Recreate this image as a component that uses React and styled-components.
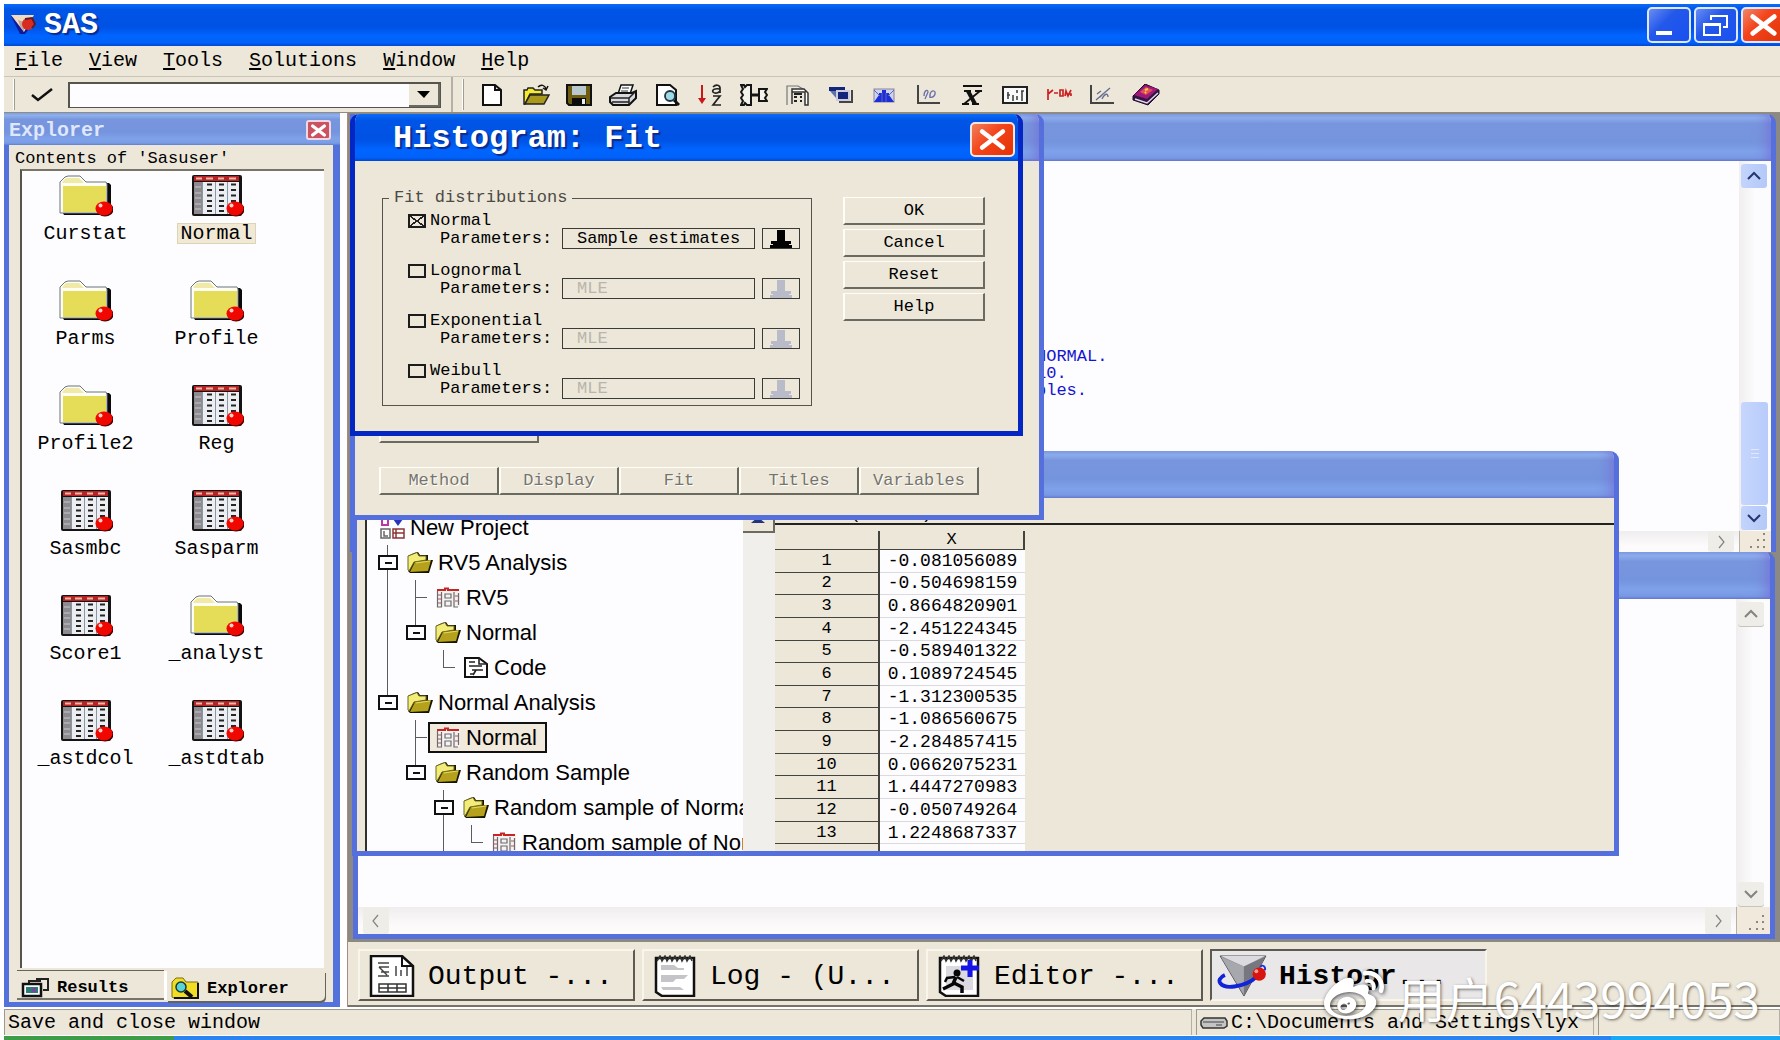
import { useState } from "react";
import styled, { createGlobalStyle, css } from "styled-components";
import { FaWeibo } from "react-icons/fa";

const GlobalStyle = createGlobalStyle`
  :root {
    --face: #ece7d9;
    --shadow: #6b6a60;
    --paper: #fdfcfe;
    --frame: #5472dc;
    --mono: "Liberation Mono", "Noto Sans CJK SC", monospace;
  }

  * {
    box-sizing: border-box;
  }

  body {
    margin: 0;
    background: #fff;
    color: #000;
    font-family: var(--mono);
    font-size: 20px;
  }

  button, input {
    font: inherit;
    color: inherit;
    margin: 0;
    padding: 0;
    border-radius: 0;
  }

  svg {
    display: block;
    flex: none;
  }
`;

const Page = styled.div`
  position: relative;
  display: flex;
  flex-direction: column;
  height: 100vh;
  min-height: 960px;
  overflow: hidden;
  padding-top: 4px;
`;

const activeBar = css`
  background: linear-gradient(#0a6cf8 0, #0054e6 14%, #0052e4 55%, #0064ff 75%, #0062fa 92%, #0048d0 100%);
`;

const inactiveBar = css`
  background: linear-gradient(#7f9fe6 0, #8eb0ec 8%, #7896de 20%, #7594de 60%, #7ea2ea 80%, #7a9ce6 94%, #5f7ccc 100%);
`;

/* main title bar */
const TitleBar = styled.header`
  ${activeBar}
  display: flex;
  align-items: center;
  gap: 8px;
  height: 42px;
  flex: none;
  margin: 0 -5px 0 4px;
  padding-left: 6px;

  & h1 {
    flex: 1;
    margin: 0;
    font-size: 30px;
    line-height: 36px;
    color: #fff;
    text-shadow: 2px 2px 1px #0a2c90;
  }
`;

const WindowButton = styled.button`
  display: flex;
  align-items: center;
  justify-content: center;
  width: 44px;
  height: 36px;
  margin-left: ${(props) => (props.$first ? "0" : "-5px")};
  border: 2px solid #dfe8ff;
  border-radius: 5px;
  background: ${(props) =>
    props.$close
      ? "linear-gradient(135deg, #f0886a, #f4441c 40%, #e03408)"
      : "linear-gradient(135deg, #6a8cf4, #2358ea 40%, #1a50f0)"};
`;

const MenuBar = styled.nav`
  display: flex;
  gap: 26px;
  flex: none;
  height: 30px;
  margin-left: 4px;
  padding-left: 11px;
  background: var(--face);

  & button {
    border: 0;
    background: none;
    line-height: 28px;
  }

  & u {
    text-underline-offset: 2px;
  }
`;

const ToolBar = styled.div`
  display: flex;
  align-items: center;
  flex: none;
  height: 37px;
  margin-left: 4px;
  border-top: 1px solid #c9c5b8;
  border-bottom: 1px solid #8f8c80;
  background: var(--face);
`;

const Grip = styled.span`
  width: 11px;
  height: 31px;
  border-right: 1px solid #a09c90;
  box-shadow: inset -1px 0 #fff;
`;

const ToolSeparator = styled.span`
  width: 2px;
  height: 35px;
  margin-left: 10px;
  background: #b4b0a4;
`;

const PlainButton = styled.button`
  display: flex;
  align-items: center;
  justify-content: center;
  width: ${(props) => props.$width || 28}px;
  height: 24px;
  border: 0;
  background: none;
`;

const CommandBox = styled.div`
  display: flex;
  width: 373px;
  height: 26px;
  border: 1px solid #55554d;
  border-width: 2px 1px 1px 2px;
  background: var(--paper);

  & input {
    flex: 1;
    min-width: 0;
    border: 0;
    background: none;
    padding: 0 4px;
    outline: none;
  }

  & button {
    display: flex;
    align-items: center;
    justify-content: center;
    width: 31px;
    border: 0;
    border-right: 2px solid var(--shadow);
    border-bottom: 2px solid var(--shadow);
    background: var(--face);
  }
`;

const ToolIcons = styled.div`
  display: flex;
  justify-content: space-between;
  width: 682px;
  margin-left: 14px;
`;

const Workspace = styled.main`
  display: flex;
  flex: 1;
  min-height: 0;
  gap: 7px;
  padding: 0 0 2px 4px;
`;

/* explorer */
const ExplorerPane = styled.section`
  display: flex;
  flex-direction: column;
  flex: none;
  width: 336px;
  border: 5px solid var(--frame);
  border-width: 0 7px 5px 5px;
  background: var(--face);
`;

const ExplorerTitle = styled.div`
  ${inactiveBar}
  display: flex;
  align-items: center;
  justify-content: space-between;
  flex: none;
  height: 32px;
  margin: 0 -7px 0 -5px;
  padding: 2px 9px 0 5px;
  font-weight: bold;
  color: #dfe7fb;

  & button {
    display: flex;
    align-items: center;
    justify-content: center;
    width: 25px;
    height: 20px;
    border: 2px solid #f0d8e0;
    border-radius: 3px;
    background: #cb5260;
  }
`;

const ExplorerCaption = styled.div`
  flex: none;
  height: 24px;
  padding-left: 6px;
  font-size: 17px;
  line-height: 28px;
`;

const IconGrid = styled.div`
  display: grid;
  grid-template-columns: 127px 135px;
  grid-auto-rows: 105px;
  align-content: start;
  flex: 1;
  min-height: 0;
  overflow: hidden;
  margin: 0 9px 0 11px;
  padding-top: 4px;
  border-left: 2px solid #55554d;
  border-top: 2px solid #77756a;
  background: var(--paper);
`;

const Entry = styled.button`
  display: flex;
  flex-direction: column;
  align-items: center;
  border: 0;
  background: none;

  & svg {
    margin-bottom: 7px;
  }

  & span {
    padding: 0 2px;
    line-height: 19px;
    ${(props) => props.$selected && "background: #f1e9d6; outline: 1px solid #ddd4b8;"}
  }
`;

const ExplorerTabs = styled.div`
  display: flex;
  flex: none;
  gap: 3px;
  height: 34px;
  padding: 3px 8px 1px 8px;
  font-size: 17px;
  font-weight: bold;

  & button {
    display: flex;
    align-items: center;
    gap: 7px;
    border: 0;
    background: var(--face);
    padding: 4px 0 0 4px;
  }
`;

const ResultsTab = styled.button`
  width: 147px;
  height: 29px;
  box-shadow: 0 -1px #66645a, inset 0 -2px #77756a, 3px 0 #fff;
`;

const ExplorerTab = styled.button`
  width: 158px;
  height: 30px;
  border-radius: 0 0 5px 0;
  box-shadow: 1px 2px #66645a;
`;

/* mdi area */
const RightSide = styled.div`
  display: flex;
  flex-direction: column;
  flex: 1;
  min-width: 0;
  border-left: 1px solid #a98c80;
`;

const Desktop = styled.div`
  position: relative;
  flex: 1;
  min-height: 0;
  overflow: hidden;
  background: #8c8884;
`;

const ChildWindow = styled.section`
  position: absolute;
  top: ${(props) => props.$top}px;
  left: ${(props) => props.$left}px;
  ${(props) => (props.$right !== undefined ? `right: ${props.$right}px;` : `width: ${props.$width}px;`)}
  ${(props) => (props.$height ? `height: ${props.$height}px;` : "bottom: 1px;")}
  display: flex;
  flex-direction: column;
  overflow: hidden;
  border: solid ${(props) => (props.$active ? "#0427c4" : "#5570dc")};
  border-width: 0 5px ${(props) => (props.$open ? 0 : 5)}px 5px;
  border-radius: ${(props) => (props.$active ? "9px" : "0")} 9px 0 0;
  background: var(--face);
`;

const ChildTitle = styled.div`
  ${(props) => (props.$active ? activeBar : inactiveBar)}
  display: flex;
  align-items: center;
  justify-content: space-between;
  flex: none;
  height: 47px;
  margin: 0 -5px;
  padding: 3px 8px 0 43px;
  color: #fff;
  ${(props) => !props.$active && "box-shadow: inset -14px 0 16px -8px #746cd4;"}

  & h2 {
    margin: 0;
    font-size: 32px;
    line-height: 40px;
    text-shadow: 2px 2px 1px #0a2c90;
  }
`;

const DialogClose = styled.button`
  display: flex;
  align-items: center;
  justify-content: center;
  width: 45px;
  height: 35px;
  border: 2px solid #fbe4dc;
  border-radius: 5px;
  background: linear-gradient(135deg, #f0805c, #f4431a 45%, #e23206);
`;

const TextPane = styled.div`
  display: grid;
  grid-template-columns: minmax(0, 1fr) ${(props) => props.$side}px;
  grid-template-rows: minmax(0, 1fr) ${(props) => props.$bar}px;
  flex: 1;
  min-height: 0;
  background: var(--paper);
`;

const LogText = styled.pre`
  margin: 0;
  padding: 187px 0 0 681px;
  font-family: var(--mono);
  font-size: 17px;
  line-height: 17px;
  color: #1414d2;
`;

const VerticalBar = styled.div`
  display: flex;
  flex-direction: column;
  justify-content: space-between;
  padding: 3px 3px 1px 2px;
  background: linear-gradient(90deg, #f0eeee, #fcfbfd 50%);
`;

const HorizontalBar = styled.div`
  display: flex;
  justify-content: space-between;
  padding: 0 5px;
  background: linear-gradient(#efedee, #fcfafb 70%);
`;

const ArrowButton = styled.button`
  display: flex;
  align-items: center;
  justify-content: center;
  width: 26px;
  height: ${(props) => (props.$flat ? "100%" : "24px")};
  border: 0;
  border-radius: 3px;
  color: ${(props) => (props.$live ? "#25356f" : "#85837f")};
  background: ${(props) => (props.$live ? "linear-gradient(90deg, #c3d4fc, #b4c9f8)" : "#efede8")};
  ${(props) => !props.$live && !props.$flat && "box-shadow: 0 1px #c8c4bc;"}
`;

const Thumb = styled.div`
  display: flex;
  flex-direction: column;
  align-items: center;
  justify-content: center;
  gap: 3px;
  height: 103px;
  margin: auto 0 1px;
  border-radius: 3px;
  background: linear-gradient(90deg, #c6d6fd, #b8cbfa);

  & i {
    width: 8px;
    height: 1px;
    background: #dfe8ff;
  }
`;

const SizeGrip = styled.div`
  display: flex;
  align-items: flex-end;
  justify-content: flex-end;
  padding: 3px 5px;
  border-left: 1px solid #b5b0a4;
  background: #f0e9dc;
`;

/* analyst */
const AnalystBody = styled.div`
  display: flex;
  flex: 1;
  min-height: 0;
`;

const Tree = styled.div`
  flex: none;
  width: 378px;
  overflow: hidden;
  margin-left: 8px;
  padding-top: 12px;
  border-left: 2px solid #303030;
  background: var(--paper);
  font-family: "Liberation Sans", sans-serif;
  font-size: 22px;
  white-space: nowrap;
`;

const TreeRow = styled.div`
  display: flex;
  align-items: center;
  height: 35px;
  padding-left: 11px;
`;

const Guide = styled.span`
  position: relative;
  flex: none;
  width: 28px;
  height: 35px;
  background-image: linear-gradient(#5c5c5c, #5c5c5c), linear-gradient(#5c5c5c, #5c5c5c);
  background-repeat: no-repeat;
  background-position: 9px 0, 9px 17px;
  background-size: 1px ${(props) => (props.$line ? "35px" : props.$stub ? "17px" : "0")},
    ${(props) => (props.$stub ? "12px" : "0")} 1px;
`;

const Expander = styled.button`
  flex: none;
  width: 20px;
  height: 15px;
  margin-right: 8px;
  border: 2px solid #111;
  background: linear-gradient(#111, #111) center / 7px 2px no-repeat var(--paper);
`;

/* carries the guide line from the row above down to the box */
const ExpanderCell = styled.span`
  display: flex;
  align-items: center;
  flex: none;
  height: 35px;
  background-image: linear-gradient(#5c5c5c, #5c5c5c);
  background-repeat: no-repeat;
  background-position: 9px 0;
  background-size: 1px ${(props) => (props.$joined === "through" ? "35px" : props.$joined === "below" ? "0" : "17px")};
  ${(props) => props.$joined === "below" && "background-position: 9px 17px; background-size: 1px 18px;"}
`;

const TreeLabel = styled.button`
  display: flex;
  align-items: center;
  gap: 4px;
  height: 31px;
  border: 0;
  background: none;
  ${(props) =>
    props.$selected && "margin-left: -6px; padding: 0 8px 0 4px; border: 2px solid #111; background: #f0e9dc;"}
`;

const TreeScroll = styled.div`
  flex: none;
  width: 32px;
  background: #f1efec;

  & button {
    display: flex;
    align-items: flex-end;
    justify-content: center;
    width: 32px;
    height: 35px;
    padding-bottom: 8px;
    border: 0;
    border-right: 2px solid var(--shadow);
    border-bottom: 2px solid var(--shadow);
    background: var(--face);
  }
`;

const Sheet = styled.div`
  flex: 1;
  min-width: 0;
  overflow: hidden;
`;

const SheetName = styled.div`
  height: 27px;
  padding-left: 4px;
  border-bottom: 2px solid #222;
  font-size: 17px;
  line-height: 34px;
`;

const DataTable = styled.table`
  width: 250px;
  height: 336px;
  margin-top: 6px;
  border-collapse: separate;
  border-spacing: 0;
  font-size: 18px;
  line-height: 18px;

  & th, & td {
    padding: 0;
    font-weight: normal;
    text-align: center;
  }

  & th {
    border-right: 2px solid #44443e;
    border-bottom: 1px solid #44443e;
    font-size: 17px;
  }

  & th:first-child {
    width: 105px;
  }

  & td {
    border-bottom: 1px solid #dcdadc;
    background: var(--paper);
  }
`;

/* histogram dialogs */
const RaisedButton = styled.button`
  width: ${(props) => props.$width}px;
  height: 28px;
  border: solid;
  border-width: 1px 2px 2px 2px;
  border-color: #fffdf4 var(--shadow) var(--shadow) #fffdf4;
  background: var(--face);
  font-size: 17px;
  line-height: 24px;

  &:disabled {
    color: #77746c;
    text-shadow: 1px 1px #fff;
  }
`;

const ParentBody = styled.div`
  display: flex;
  flex-direction: column;
  justify-content: flex-end;
  align-items: flex-start;
  gap: 24px;
  flex: 1;
  padding: 0 0 20px 24px;
`;

const ButtonStrip = styled.div`
  display: flex;
`;

const FitBody = styled.div`
  display: flex;
  align-items: flex-start;
  gap: 31px;
  padding: 27px 0 0 27px;
`;

const FitGroup = styled.fieldset`
  width: 430px;
  margin: 0;
  padding: 6px 6px 6px;
  border: 1px solid #55534c;
  font-size: 17px;

  & legend {
    padding: 0 5px;
    line-height: 20px;
    color: #4c4a44;
  }
`;

const FitRow = styled.div`
  padding: 0 0 15px 19px;

  &:last-child {
    padding-bottom: 0;
  }

  & label {
    display: flex;
    align-items: center;
  }
`;

const NameLine = styled.label`
  gap: 4px;
  height: 14px;
  line-height: 14px;
`;

const CheckBox = styled.input`
  appearance: none;
  width: 18px;
  height: 14px;
  border: 2px solid #1c1c1c;

  &:checked {
    background: linear-gradient(to top right, transparent 45%, #222 45%, #222 55%, transparent 55%),
      linear-gradient(to bottom right, transparent 45%, #222 45%, #222 55%, transparent 55%);
  }
`;

const ParameterLine = styled.div`
  display: flex;
  align-items: center;
  height: 21px;
  padding-left: 32px;

  & label {
    width: 122px;
  }

  & input {
    width: 193px;
    height: 21px;
    margin-right: 7px;
    padding: 0 0 0 14px;
    border: 1px solid #3a3a36;
    background: none;
    font-size: 17px;
  }

  & input:disabled {
    color: #b9b5aa;
  }

  & button {
    display: flex;
    align-items: flex-end;
    justify-content: center;
    width: 38px;
    height: 21px;
    border: 1px solid #3a3a36;
    background: none;
    color: #000;
  }

  & button:disabled {
    color: #b9bcc8;
  }
`;

const DialogButtons = styled.div`
  display: flex;
  flex-direction: column;
  gap: 4px;
  margin-top: 9px;
`;

/* bottom bars */
const WindowBar = styled.div`
  display: flex;
  flex: none;
  gap: 7px;
  height: 67px;
  padding: 7px 0 0 10px;
  border-top: 2px solid #8c897e;
  border-bottom: 2px solid #76746a;
  background: var(--face);
`;

const WindowTab = styled.button`
  display: flex;
  align-items: center;
  gap: 13px;
  width: 277px;
  height: 52px;
  padding: 2px 0 0 9px;
  border: 2px solid;
  border-color: #f8f5ea #5c5a52 #5c5a52 #f8f5ea;
  background: var(--face);
  font-size: 28px;
  white-space: nowrap;
  ${(props) =>
    props.$active &&
    "gap: 10px; padding-left: 5px; border-color: #5c5a52 #f8f5ea #f8f5ea #5c5a52; background: #e9e7e8; font-weight: bold;"}
`;

const StatusBar = styled.footer`
  display: flex;
  gap: 4px;
  flex: none;
  height: 26px;
  margin-left: 4px;
  background: var(--face);
  line-height: 26px;
`;

const StatusPane = styled.div`
  display: flex;
  align-items: center;
  gap: 3px;
  width: ${(props) => (props.$width ? props.$width + "px" : "auto")};
  flex: ${(props) => (props.$width ? "none" : "1")};
  padding-left: 3px;
  border-top: 1px solid #9c998e;
  border-left: 1px solid #9c998e;
  border-right: 1px solid #b4b0a4;
  white-space: nowrap;
`;

const SystemStrip = styled.div`
  flex: none;
  height: 4px;
  margin: 1px 0 0 4px;
  background: linear-gradient(90deg, #3c9c48 170px, #2a83ee 170px, #2a83ee 1607px, #18a8f4 1607px);
`;

const Watermark = styled.div`
  position: absolute;
  right: 20px;
  bottom: 12px;
  display: flex;
  align-items: center;
  gap: 14px;
  height: 62px;
  font-family: "Noto Sans CJK SC", sans-serif;
  font-size: 48px;
  line-height: 62px;
  color: #fff;
  text-shadow: 1px 1px 3px rgba(0, 0, 0, 0.55);

  & svg {
    filter: drop-shadow(1px 1px 2px rgba(0, 0, 0, 0.7));
  }
`;

const entries = [
  { name: "Curstat", folder: true },
  { name: "Normal" },
  { name: "Parms", folder: true },
  { name: "Profile", folder: true },
  { name: "Profile2", folder: true },
  { name: "Reg" },
  { name: "Sasmbc" },
  { name: "Sasparm" },
  { name: "Score1" },
  { name: "_analyst", folder: true },
  { name: "_astdcol" },
  { name: "_astdtab" },
];

// guides: "|" full line, "L" half line with a branch, "T" full line with a branch, " " nothing
const treeRows = [
  { name: "RV5 Analysis", icon: "folder", guides: "", joined: "through" },
  { name: "RV5", icon: "sheet", guides: "|T" },
  { name: "Normal", icon: "folder", guides: "|" },
  { name: "Code", icon: "code", guides: "| L" },
  { name: "Normal Analysis", icon: "folder", guides: "" },
  { name: "Normal", icon: "sheet", guides: " T", selected: true },
  { name: "Random Sample", icon: "folder", guides: " " },
  { name: "Random sample of Normal", icon: "folder", guides: "  ", joined: "through" },
  { name: "Random sample of Normal", icon: "sheet", guides: "  |L" },
];

const values = [
  "-0.081056089",
  "-0.504698159",
  "0.8664820901",
  "-2.451224345",
  "-0.589401322",
  "0.1089724545",
  "-1.312300535",
  "-1.086560675",
  "-2.284857415",
  "0.0662075231",
  "1.4447270983",
  "-0.050749264",
  "1.2248687337",
];

const distributions = ["Normal", "Lognormal", "Exponential", "Weibull"];

const Cross = ({ width, height, stroke = 4 }) => (
  <svg width={width} height={height} viewBox="0 0 24 20" fill="none" stroke="#fff" strokeWidth={stroke} strokeLinecap="round">
    <path d="M3 3L21 17M21 3L3 17" />
  </svg>
);

const Chevron = ({ dir }) => {
  const paths = {
    up: "M2 11L8 5L14 11",
    down: "M2 5L8 11L14 5",
    left: "M10 2L5 8L10 14",
    right: "M6 2L11 8L6 14",
  };
  return (
    <svg width="16" height="16" viewBox="0 0 16 16" fill="none" stroke="currentColor" strokeWidth={dir === "left" || dir === "right" ? 1.2 : 2}>
      <path d={paths[dir]} />
    </svg>
  );
};

const Ball = () => (
  <>
    <ellipse cx="46" cy="34.500" rx="8.500" ry="7" fill="#400" />
    <ellipse cx="45" cy="33.500" rx="8.500" ry="7" fill="#f00800" />
    <circle cx="41.500" cy="30.500" r="2" fill="#ffd0c8" />
  </>
);

const FolderIcon = () => (
  <svg width="54" height="42" viewBox="0 0 54 42">
    <path d="M4 38V9L9 6H26L29 8H50L52 10V38L50 40H5Z" fill="#0a0a0a" />
    <path d="M1 38V7L6 2L9 1H21L27 7H47L48 9V38Z" fill="#fffef4" stroke="#68747c" />
    <path d="M3 7L7 3H20L25 8H4Z" fill="#f0e9a8" />
    <path d="M4 37V11H47V37Z" fill="#e5dc58" />
    <Ball />
  </svg>
);

const TableIcon = () => (
  <svg width="54" height="42" viewBox="0 0 54 42">
    <rect x="2" width="50" height="41" rx="2" fill="#161314" />
    <rect x="4" y="1" width="45" height="5" fill="#b42424" />
    <path d="M6 3.500H12M16 3.500H23M28 3.500H34M39 3.500H46" stroke="#f4b8a8" strokeWidth="2" />
    <rect x="4" y="7" width="45" height="32" fill="#eceef2" />
    <rect x="4" y="7" width="8" height="32" fill="#8d8b90" />
    <path d="M5 12H11M5 18H11M5 23H11M5 29H11M5 34H11" stroke="#c8c8cc" />
    <path d="M12.500 7V39M25.500 7V39M37.500 7V39" stroke="#8898a4" />
    <path d="M17 9.500H22M17 15H22M17 20.500H22M17 26H22M17 31H22M17 36H22M29 9.500H34M29 15H34M29 20.500H34M29 26H34M29 31H34M29 36H34M41 9.500H46M41 15H46M41 20.500H46M41 26H46" stroke="#242424" strokeWidth="2" />
    <Ball />
  </svg>
);

const TreeFolder = () => (
  <svg width="28" height="24" viewBox="0 0 28 24">
    <path d="M2 20V5L8 2L12 1L14 4H22V9H27L23 22H4Z" fill="#161600" />
    <path d="M2 19V5L7 3L11 1.500L13 5H20V9L8 11L3 20Z" fill="#f4ec78" stroke="#6c6820" strokeWidth="1" />
    <path d="M9 11L25 9L22 20L4 21Z" fill="#b5a11c" />
    <path d="M10 12L24 10" stroke="#e4d860" />
  </svg>
);

const TreeSheet = () => (
  <svg width="28" height="22" viewBox="0 0 28 22">
    <rect x="3" y="2" width="23" height="18" fill="#f6f2f0" />
    <path d="M3 3H11V1.500H14V3H25" fill="none" stroke="#c82424" strokeWidth="2" />
    <path d="M3.500 4V20H8M7.500 5V20M11 7H17V11H11ZM11 14H17V19H11ZM20 5V20H24M24.500 6V18" fill="none" stroke="#6d6a72" strokeWidth="1.200" />
    <path d="M4 8H7M4 12H7M4 16H7M21 9H24M21 14H24" stroke="#a05858" />
  </svg>
);

const TreeCode = () => (
  <svg width="28" height="22" viewBox="0 0 28 22">
    <path d="M3 1H17L25 7V20H3Z" fill="#fff" stroke="#111" strokeWidth="2" />
    <path d="M17 1V7H25M7 5H13M7 9H20M10 13H21M8 17H11M14 13L11 18" fill="none" stroke="#222" strokeWidth="1.600" />
  </svg>
);

const treeIcons = { folder: TreeFolder, sheet: TreeSheet, code: TreeCode };

const SasLogo = ({ width, height }) => (
  <svg width={width} height={height} viewBox="0 0 52 44">
    <path d="M2 1H50L27 43Z" fill="#8c8c92" stroke="#55555a" />
    <path d="M3 1H49L27 12Z" fill="#dadadf" />
    <path d="M3 2L27 12V42Z" fill="#a7a7ae" />
    <path d="M49 2L27 12V42Z" fill="#77777f" />
    <path d="M7 21C-4 26 2 35 17 33C31 31 36 27 40 23" fill="none" stroke="#1224d8" strokeWidth="4" />
    <circle cx="43" cy="20" r="7" fill="#d81410" />
    <circle cx="40" cy="17" r="2" fill="#ff9c8c" />
    <path d="M44 13C46 9 50 12 49 16" fill="none" stroke="#2232d0" strokeWidth="2" />
  </svg>
);

const TitleLogo = () => (
  <svg width="26" height="22" viewBox="0 0 26 22">
    <path d="M1 2L10 20H15L18 16V8Z" fill="#10189c" />
    <path d="M1 1H24L14 18Z" fill="#f0dcc0" />
    <path d="M8 6L14 8V18L10 12Z" fill="#c8a890" />
    <circle cx="18" cy="10" r="6" fill="#d82c20" />
    <path d="M15 5L22 4L25 10L22 14" fill="none" stroke="#601828" strokeWidth="2" />
  </svg>
);

const toolIcons = [
  ["New", <path d="M5 1H17L23 6V21H5ZM17 1V6H23" fill="#fff" stroke="#111" strokeWidth="2" />],
  [
    "Open",
    <>
      <path d="M2 20V6H5L6 4H11L13 6H20V10H8L3 20Z" fill="#f4ec2c" stroke="#222" strokeWidth="1.500" />
      <path d="M8 11H27L22 20H3Z" fill="#a8981c" stroke="#222" strokeWidth="1.500" />
      <path d="M16 3C19 0 23 1 24 5M21 4L24 6L26 2" fill="none" stroke="#111" strokeWidth="1.500" />
    </>,
  ],
  [
    "Save",
    <>
      <path d="M2 1H26V21H4L2 19Z" fill="#6e5c10" stroke="#111" strokeWidth="2" />
      <rect x="7" y="2" width="14" height="9" fill="#b9c8cc" />
      <rect x="7" y="14" width="14" height="7" fill="#0c0c0c" />
      <rect x="17" y="15" width="3" height="5" fill="#eee" />
    </>,
  ],
  [
    "Print",
    <>
      <path d="M9 10L12 1H24L21 10Z" fill="#fff" stroke="#111" strokeWidth="1.500" />
      <path d="M13 4H20M12 7H19" stroke="#333" />
      <path d="M1 13L7 9H23L27 7V14L20 21H4L1 18Z" fill="#d9d9dc" stroke="#111" strokeWidth="2" />
      <path d="M2 14H20L26 8M3 18H20M20 14V20" fill="none" stroke="#222" strokeWidth="1.500" />
    </>,
  ],
  [
    "Preview",
    <>
      <path d="M5 1H18L24 6V21H5Z" fill="#fff" stroke="#111" strokeWidth="2" />
      <circle cx="18" cy="12" r="5" fill="#9edbe6" stroke="#234" strokeWidth="1.800" />
      <path d="M22 16L27 21" stroke="#111" strokeWidth="3" />
    </>,
  ],
  [
    "Sort",
    <>
      <path d="M6 1V17" stroke="#c81818" strokeWidth="2" />
      <path d="M2 14H10L6 20Z" fill="#c81818" />
      <path d="M17 3C20 0 24 1 24 4V9M24 5C18 4 16 6 17 8C19 10 23 9 24 7M17 12H24L17 21H25" fill="none" stroke="#222" strokeWidth="1.700" />
    </>,
  ],
  [
    "Join",
    <>
      <path d="M1 1H4L5 3L7 1H11V21H7L5 19L4 21H1L3 17L1 14L3 11L1 8L3 5Z" fill="#f4f2ea" stroke="#151515" strokeWidth="2" />
      <path d="M11 11H20" stroke="#151515" strokeWidth="3" />
      <path d="M19 5H27L25 8L27 11L25 14L27 17H19Z" fill="#f4f2ea" stroke="#151515" strokeWidth="2" />
    </>,
  ],
  [
    "Report",
    <>
      <path d="M4 21V2H15L20 5" fill="none" stroke="#777" strokeWidth="1.200" />
      <path d="M9 20V5H21L25 9V21H22V8H9" fill="#fff" stroke="#333" strokeWidth="1.500" />
      <path d="M11 10H19M11 13H14M17 13H19M11 17H14M17 17H19" stroke="#222" strokeWidth="2" />
    </>,
  ],
  [
    "Table",
    <>
      <rect x="2" y="3" width="16" height="4" fill="#14267c" />
      <path d="M3 7H9L12 14H9Z" fill="#5b74a4" />
      <rect x="10" y="7" width="12" height="9" fill="#14267c" stroke="#ccd" strokeWidth="2" />
      <path d="M25 6V18H12" fill="none" stroke="#444" strokeWidth="2" />
    </>,
  ],
  [
    "Histogram",
    <>
      <rect x="4" y="5" width="20" height="13" fill="#cfd2ec" stroke="#8884a0" />
      <path d="M4 18L9 11V9H12V6H16V9H19V11L24 18Z" fill="#1c2ed8" />
      <path d="M4 6L10 12M24 6L18 12M12 9V18M16 9V18" stroke="#5c64b8" />
    </>,
  ],
  [
    "Scatter",
    <>
      <path d="M4 1V19H26" fill="none" stroke="#444" strokeWidth="2" />
      <path d="M10 12C10 6 14 5 14 8L11 15M16 14C15 8 19 5 21 8C22 12 18 14 16 13" fill="none" stroke="#6c72a8" strokeWidth="1.300" />
    </>,
  ],
  [
    "Mean",
    <>
      <path d="M5 2H24M6 7H13M17 7H24M4 20H11M14 20H21M22 7L6 20" fill="none" stroke="#111" strokeWidth="1.800" />
      <path d="M10 7L17 20" stroke="#111" strokeWidth="4" />
    </>,
  ],
  [
    "Columns",
    <>
      <rect x="2" y="3" width="24" height="16" fill="#fbfafa" stroke="#222" strokeWidth="2" />
      <path d="M7 8V15M12 11V17M16 6V9M16 12V16M21 7V17M6 11H9M20 7H23" stroke="#444" strokeWidth="1.600" />
    </>,
  ],
  [
    "Test",
    <path d="M3 5V16M3 10L8 6M9 9H13M15 6H18V12H15ZM20 12L21 7L23 12L26 6M22 10H26V12" fill="none" stroke="#cc2020" strokeWidth="1.700" />,
  ],
  [
    "Regression",
    <>
      <path d="M3 1V19H26" fill="none" stroke="#444" strokeWidth="2" />
      <path d="M8 16L22 4M9 10L13 7M14 15C17 9 20 9 20 13M12 13L15 10" fill="none" stroke="#666b90" strokeWidth="1.300" />
    </>,
  ],
  [
    "Help",
    <>
      <path d="M1 12L13 0L27 6V10L16 21L1 16Z" fill="#321540" stroke="#200c30" />
      <path d="M2 11L13 1L26 5L15 15Z" fill="#a01878" />
      <path d="M8 8L14 3L21 6L14 11Z" fill="#e05058" />
      <path d="M13 6L16 5M13 9L14 8" stroke="#ffd040" strokeWidth="2" />
      <path d="M3 15L15 19L26 9" fill="none" stroke="#e4d8ec" strokeWidth="1.500" />
    </>,
  ],
];

const OutputIcon = () => (
  <svg width="46" height="42" viewBox="0 0 46 42">
    <path d="M2 1H33L44 11V41H2Z" fill="#fff" stroke="#111" strokeWidth="2.500" />
    <path d="M33 1V11H44" fill="none" stroke="#111" strokeWidth="2" />
    <path d="M9 8H20M10 12H20M10 12L18 20M12 17H20M9 21H20M27 11V21M32 15V21M38 12V21" stroke="#444" strokeWidth="1.500" />
    <path d="M10 29H37V37H10ZM10 33H37M19 29V37M28 29V37" fill="none" stroke="#333" strokeWidth="1.500" />
  </svg>
);

const PadShape = () => (
  <>
    <path d="M2 3H40V41H8L2 37Z" fill="#fff" stroke="#111" strokeWidth="2.500" />
    <path d="M3 6L6 1L8 6L11 1L13 6L16 1L18 6L21 1L23 6L26 1L28 6L31 1L33 6L36 1L38 6" fill="none" stroke="#333" strokeWidth="1.500" />
  </>
);

const LogIcon = () => (
  <svg width="44" height="42" viewBox="0 0 42 42">
    <PadShape />
    <path d="M7 10H20L24 13H30V15H7ZM7 20H34L30 24H22L19 27H7ZM7 32H26L30 35H9Z" fill="#c6c4c8" />
  </svg>
);

const EditorIcon = () => (
  <svg width="44" height="42" viewBox="0 0 42 42">
    <PadShape />
    <rect x="8" y="11" width="27" height="24" fill="#dcdae0" />
    <path d="M32 5V22M23 13H41" stroke="#1414e4" strokeWidth="5" />
    <circle cx="19" cy="18" r="3.500" fill="#050505" />
    <path d="M18 22L15 29L5 34M16 28L24 32V38" fill="none" stroke="#050505" strokeWidth="3.500" />
    <path d="M17 22L9 23L7 27M19 22L26 26" fill="none" stroke="#050505" strokeWidth="2.500" />
  </svg>
);

const ResultsIcon = () => (
  <svg width="29" height="20" viewBox="0 0 29 20">
    <path d="M8 6V3H20M15 1H27V12H22" fill="none" stroke="#222" strokeWidth="2" />
    <rect x="2" y="6" width="18" height="12" fill="#fff" stroke="#111" strokeWidth="2.500" />
    <rect x="5" y="9" width="12" height="6" fill="#2c7c78" />
    <path d="M11 10H15V14H11Z" fill="#6a4c98" />
  </svg>
);

const ExplorerIcon = () => (
  <svg width="29" height="22" viewBox="0 0 29 22">
    <path d="M1 20V5L5 1H12L15 5H27V21H3Z" fill="#f2dc24" stroke="#7c6c10" />
    <path d="M27 6V21H3" fill="none" stroke="#111" strokeWidth="2" />
    <circle cx="10" cy="10" r="5" fill="#5cd4d4" stroke="#143c3c" strokeWidth="1.500" />
    <path d="M14 14L21 20" stroke="#111" strokeWidth="4" />
  </svg>
);

const ProjectIcon = () => (
  <svg width="28" height="22" viewBox="0 0 28 22" fill="none">
    <path d="M4 2H10V8H4Z" stroke="#b838a8" strokeWidth="2" />
    <path d="M15 2H25L20 9Z" fill="#2a34b8" />
    <path d="M3 12H12V21H3ZM6 14V19H10" stroke="#666" strokeWidth="1.500" />
    <path d="M15 12H26V21H15ZM18 12V21M15 16H26" stroke="#8c3434" strokeWidth="1.500" />
  </svg>
);

const DownTool = () => (
  <svg width="24" height="18" viewBox="0 0 24 18" fill="currentColor">
    <path d="M8 0H16V11H22V14H20V15H23V18H1V15H4V14H2V11H8Z" />
  </svg>
);

const GripDots = () => (
  <svg width="16" height="16" viewBox="0 0 16 16" fill="#8c887c">
    <path d="M13 0h2v2h-2zM7 6h2v2H7zM13 6h2v2h-2zM0 13h2v2H0zM7 13h2v2H7zM13 13h2v2h-2z" />
  </svg>
);

const Explorer = () => {
  const [selected, setSelected] = useState("Normal");

  return (
    <ExplorerPane>
      <ExplorerTitle>
        Explorer
        <button aria-label="Close explorer">
          <Cross width={17} height={13} stroke={5} />
        </button>
      </ExplorerTitle>
      <ExplorerCaption>Contents of 'Sasuser'</ExplorerCaption>
      <IconGrid>
        {entries.map((entry) => (
          <Entry key={entry.name} $selected={entry.name === selected} onClick={() => setSelected(entry.name)}>
            {entry.folder ? <FolderIcon /> : <TableIcon />}
            <span>{entry.name}</span>
          </Entry>
        ))}
      </IconGrid>
      <ExplorerTabs>
        <ResultsTab>
          <ResultsIcon />
          Results
        </ResultsTab>
        <ExplorerTab>
          <ExplorerIcon />
          Explorer
        </ExplorerTab>
      </ExplorerTabs>
    </ExplorerPane>
  );
};

const LogWindow = () => (
  <ChildWindow $top={1} $left={2} $right={4} $height={438} $open>
    <ChildTitle />
    <TextPane $bar={21} $side={32}>
      <LogText>{"NORMAL.\n10.\nbles."}</LogText>
      <VerticalBar>
        <ArrowButton $live aria-label="Scroll up">
          <Chevron dir="up" />
        </ArrowButton>
        <Thumb>
          <i />
          <i />
          <i />
        </Thumb>
        <ArrowButton $live aria-label="Scroll down">
          <Chevron dir="down" />
        </ArrowButton>
      </VerticalBar>
      <HorizontalBar>
        <span />
        <ArrowButton $flat aria-label="Scroll right">
          <Chevron dir="right" />
        </ArrowButton>
      </HorizontalBar>
      <SizeGrip>
        <GripDots />
      </SizeGrip>
    </TextPane>
  </ChildWindow>
);

const EditorWindow = () => (
  <ChildWindow $top={439} $left={5} $right={5}>
    <ChildTitle />
    <TextPane $bar={27} $side={34}>
      <div />
      <VerticalBar>
        <ArrowButton aria-label="Scroll up">
          <Chevron dir="up" />
        </ArrowButton>
        <ArrowButton aria-label="Scroll down">
          <Chevron dir="down" />
        </ArrowButton>
      </VerticalBar>
      <HorizontalBar>
        <ArrowButton $flat aria-label="Scroll left">
          <Chevron dir="left" />
        </ArrowButton>
        <ArrowButton $flat aria-label="Scroll right">
          <Chevron dir="right" />
        </ArrowButton>
      </HorizontalBar>
      <SizeGrip>
        <GripDots />
      </SizeGrip>
    </TextPane>
  </ChildWindow>
);

const AnalystWindow = () => (
  <ChildWindow $top={338} $left={4} $right={161} $height={405}>
    <ChildTitle />
    <AnalystBody>
      <Tree>
        <TreeRow>
          <TreeLabel>
            <ProjectIcon />
            New Project
          </TreeLabel>
        </TreeRow>
        {treeRows.map((row, index) => {
          const Icon = treeIcons[row.icon];
          return (
            <TreeRow key={index}>
              {row.guides.split("").map((mark, i) => (
                <Guide key={i} $line={mark === "|" || mark === "T"} $stub={mark === "L" || mark === "T"} />
              ))}
              {row.icon === "folder" && (
                <ExpanderCell $joined={row.joined}>
                  <Expander aria-label={"Collapse " + row.name} />
                </ExpanderCell>
              )}
              <TreeLabel $selected={row.selected}>
                <Icon />
                {row.name}
              </TreeLabel>
            </TreeRow>
          );
        })}
      </Tree>
      <TreeScroll>
        <button aria-label="Scroll tree up">
          <svg width="14" height="6" viewBox="0 0 14 6">
            <path d="M0 6L7 0L14 6Z" fill="#26347c" />
          </svg>
        </button>
      </TreeScroll>
      <Sheet>
        <SheetName>Normal (Normal)</SheetName>
        <DataTable>
          <thead>
            <tr>
              <th>&nbsp;</th>
              <th>X</th>
            </tr>
          </thead>
          <tbody>
            {values.map((value, index) => (
              <tr key={value}>
                <th>{index + 1}</th>
                <td>{value}</td>
              </tr>
            ))}
            <tr>
              <th>&nbsp;</th>
              <td>&nbsp;</td>
            </tr>
          </tbody>
        </DataTable>
      </Sheet>
    </AnalystBody>
  </ChildWindow>
);

const HistogramWindow = () => (
  <ChildWindow $top={1} $left={2} $width={694} $height={406}>
    <ChildTitle />
    <ParentBody>
      <ButtonStrip>
        <RaisedButton $width={160}>Reset</RaisedButton>
      </ButtonStrip>
      <ButtonStrip>
        {["Method", "Display", "Fit", "Titles", "Variables"].map((name) => (
          <RaisedButton key={name} $width={120} disabled>
            {name}
          </RaisedButton>
        ))}
      </ButtonStrip>
    </ParentBody>
  </ChildWindow>
);

const FitDialog = () => {
  const [checked, setChecked] = useState(["Normal"]);

  const toggleHandler = (name) => {
    setChecked(checked.includes(name) ? checked.filter((item) => item !== name) : [...checked, name]);
  };

  return (
    <ChildWindow $active $top={1} $left={2} $width={673} $height={322}>
      <ChildTitle $active>
        <h2>Histogram: Fit</h2>
        <DialogClose aria-label="Close dialog">
          <Cross width={29} height={23} />
        </DialogClose>
      </ChildTitle>
      <FitBody>
        <FitGroup>
          <legend>Fit distributions</legend>
          {distributions.map((name) => {
            const on = checked.includes(name);
            return (
              <FitRow key={name}>
                <NameLine>
                  <CheckBox type="checkbox" checked={on} onChange={() => toggleHandler(name)} />
                  {name}
                </NameLine>
                <ParameterLine>
                  <label htmlFor={"par-" + name}>Parameters:</label>
                  <input id={"par-" + name} readOnly disabled={!on} value={on ? "Sample estimates" : "MLE"} />
                  <button disabled={!on} aria-label={name + " parameters"}>
                    <DownTool />
                  </button>
                </ParameterLine>
              </FitRow>
            );
          })}
        </FitGroup>
        <DialogButtons>
          {["OK", "Cancel", "Reset", "Help"].map((name) => (
            <RaisedButton key={name} $width={142}>
              {name}
            </RaisedButton>
          ))}
        </DialogButtons>
      </FitBody>
    </ChildWindow>
  );
};

const App = () => {
  const [command, setCommand] = useState("");

  return (
    <Page>
      <GlobalStyle />
      <TitleBar>
        <TitleLogo />
        <h1>SAS</h1>
        <WindowButton $first aria-label="Minimize">
          <svg width="28" height="22" viewBox="0 0 28 22">
            <rect x="1" y="17" width="16" height="4" fill="#fff" />
          </svg>
        </WindowButton>
        <WindowButton aria-label="Restore">
          <svg width="28" height="24" viewBox="0 0 28 24" fill="none" stroke="#fff" strokeWidth="2">
            <path d="M9 7V3H25V14H21M8 3H26" />
            <path d="M2 11H18V22H2ZM2 12H18" />
          </svg>
        </WindowButton>
        <WindowButton $close aria-label="Close">
          <Cross width={29} height={24} />
        </WindowButton>
      </TitleBar>
      <MenuBar>
        {["File", "View", "Tools", "Solutions", "Window", "Help"].map((name) => (
          <button key={name}>
            <u>{name[0]}</u>
            {name.slice(1)}
          </button>
        ))}
      </MenuBar>
      <ToolBar>
        <Grip />
        <PlainButton $width={53} aria-label="Submit command">
          <svg width="22" height="14" viewBox="0 0 22 14" fill="none" stroke="#111" strokeWidth="2.500">
            <path d="M1 7L7 12L21 1" />
          </svg>
        </PlainButton>
        <CommandBox>
          <input aria-label="Command" value={command} onChange={(event) => setCommand(event.target.value)} />
          <button aria-label="Recent commands">
            <svg width="13" height="7" viewBox="0 0 13 7">
              <path d="M0 0H13L7 7Z" />
            </svg>
          </button>
        </CommandBox>
        <ToolSeparator />
        <Grip />
        <ToolIcons>
          {toolIcons.map(([name, drawing]) => (
            <PlainButton key={name} aria-label={name}>
              <svg width="28" height="22" viewBox="0 0 28 22" fill="none">
                {drawing}
              </svg>
            </PlainButton>
          ))}
        </ToolIcons>
      </ToolBar>
      <Workspace>
        <Explorer />
        <RightSide>
          <Desktop>
            <LogWindow />
            <EditorWindow />
            <AnalystWindow />
            <HistogramWindow />
            <FitDialog />
          </Desktop>
          <WindowBar>
            <WindowTab>
              <OutputIcon />
              Output -...
            </WindowTab>
            <WindowTab>
              <LogIcon />
              Log - (U...
            </WindowTab>
            <WindowTab>
              <EditorIcon />
              Editor -...
            </WindowTab>
            <WindowTab $active>
              <SasLogo width={52} height={42} />
              Histogr...
            </WindowTab>
          </WindowBar>
        </RightSide>
      </Workspace>
      <StatusBar>
        <StatusPane>Save and close window</StatusPane>
        <StatusPane $width={398}>
          <svg width="28" height="12" viewBox="0 0 28 12">
            <path d="M4 1H25L27 4V9L24 11H3L1 8V4Z" fill="#c4c4c4" stroke="#333" strokeWidth="1.500" />
            <path d="M3 5H24M16 8H22" stroke="#444" />
          </svg>
          C:\Documents and Settings\lyx
        </StatusPane>
        <StatusPane $width={182} />
      </StatusBar>
      <SystemStrip />
      <Watermark>
        <FaWeibo size={60} />
        用户6443994053
      </Watermark>
    </Page>
  );
};

export default App;
